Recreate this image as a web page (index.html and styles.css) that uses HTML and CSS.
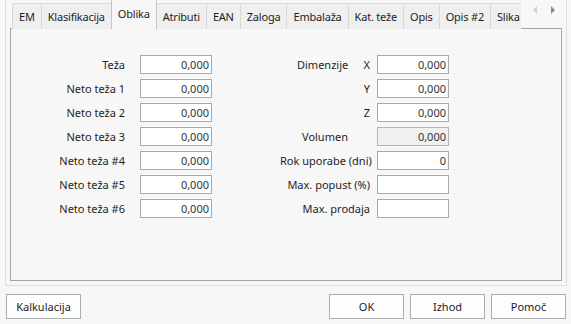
FILE: index.html
```html
<!DOCTYPE html>
<html lang="sl">
<head>
  <meta charset="UTF-8" />
  <title>Oblika</title>
  <link rel="stylesheet" href="styles.css">
</head>
<body>

  <div class="frame">
    <div class="tab-strip">
      <div class="tabs">
        <div class="tab">EM</div>
        <div class="tab">Klasifikacija</div>
        <div class="tab active">Oblika</div>
        <div class="tab">Atributi</div>
        <div class="tab">EAN</div>
        <div class="tab">Zaloga</div>
        <div class="tab">Embalaža</div>
        <div class="tab">Kat. teže</div>
        <div class="tab">Opis</div>
        <div class="tab">Opis #2</div>
        <div class="tab">Slika</div>
      </div>
      <div class="tab-arrows">
        <span class="arrow left"></span>
        <span class="arrow right"></span>
      </div>
    </div>

    <div class="panel">
      <div class="col col-left">
        <label>Teža</label><div class="field">0,000</div>
        <label>Neto teža 1</label><div class="field">0,000</div>
        <label>Neto teža 2</label><div class="field">0,000</div>
        <label>Neto teža 3</label><div class="field">0,000</div>
        <label>Neto teža #4</label><div class="field">0,000</div>
        <label>Neto teža #5</label><div class="field">0,000</div>
        <label>Neto teža #6</label><div class="field">0,000</div>
      </div>

      <div class="col col-right">
        <label class="split"><span>Dimenzije</span><span>X</span></label><div class="field">0,000</div>
        <label>Y</label><div class="field">0,000</div>
        <label>Z</label><div class="field">0,000</div>
        <label class="left">Volumen</label><div class="field disabled">0,000</div>
        <label>Rok uporabe (dni)</label><div class="field">0</div>
        <label>Max. popust (%)</label><div class="field"></div>
        <label>Max. prodaja</label><div class="field"></div>
      </div>
    </div>
  </div>

  <div class="buttons">
    <button>Kalkulacija</button>
    <div class="spacer"></div>
    <button>OK</button>
    <button>Izhod</button>
    <button>Pomoč</button>
  </div>

</body>
</html>
```

FILE: styles.css
```css
body {
  margin: 0;
  background: #f7f7f7;
  font-family: "Noto Sans", sans-serif;
  font-size: 11px;
  color: #1e1e1e;
}

.frame {
  margin: 0 4px 0 5px;
  height: 286px;
  border: 1px solid #dedede;
  border-top: none;
  padding: 0 4px 4px 4px;
  box-sizing: border-box;
  display: flex;
  flex-direction: column;
}

.tab-strip {
  display: flex;
  height: 29px;
  margin-bottom: -1px;
  position: relative;
  z-index: 1;
}

.tabs {
  display: flex;
  align-items: flex-end;
  width: 509px;
  padding-left: 2px;
  overflow: hidden;
}

.tab {
  height: 26px;
  line-height: 25px;
  padding: 0 6px;
  letter-spacing: -0.2px;
  background: #efefef;
  border: 1px solid #d9d9d9;
  border-bottom: none;
  margin-right: -1px;
  white-space: nowrap;
  box-sizing: border-box;
}

.tab.active {
  height: 30px;
  line-height: 28px;
  background: #f7f7f7;
  border-color: #c4c4c4;
  position: relative;
  z-index: 2;
}

.tab-arrows {
  display: flex;
  gap: 14px;
  padding: 6px 0 0 12px;
}

.arrow {
  width: 0;
  height: 0;
  border-top: 4px solid transparent;
  border-bottom: 4px solid transparent;
}

.arrow.left {
  border-right: 4px solid #d0d0d0;
}

.arrow.right {
  border-left: 4px solid #8a8a8a;
}

.panel {
  flex: 1;
  border: 1px solid #a6a6a6;
  padding-top: 26px;
  display: flex;
  gap: 68px;
  align-items: flex-start;
}

.col {
  display: grid;
  grid-auto-rows: 19px;
  row-gap: 5px;
  align-items: center;
}

.col-left {
  grid-template-columns: 114px 72px;
  column-gap: 15px;
}

.col-right {
  grid-template-columns: 90px 72px;
  column-gap: 7px;
}

label {
  text-align: right;
  white-space: nowrap;
}

label.split {
  display: flex;
  justify-content: space-between;
  padding-left: 17px;
}

label.left {
  text-align: left;
  padding-left: 22px;
}

.field {
  height: 19px;
  box-sizing: border-box;
  border: 1px solid #a8a8a8;
  background: #fff;
  text-align: right;
  padding-right: 2px;
  line-height: 17px;
  color: #333;
}

.field.disabled {
  background: #f0f0f0;
  border-color: #b4b4b4;
}

.buttons {
  display: flex;
  gap: 6px;
  padding: 8px 5px 0 6px;
}

.spacer {
  flex: 1;
}

button {
  width: 75px;
  height: 25px;
  background: #fdfdfd;
  border: 1px solid #adadad;
  font-family: inherit;
  font-size: 11px;
  color: #1e1e1e;
  padding: 0;
}
```
